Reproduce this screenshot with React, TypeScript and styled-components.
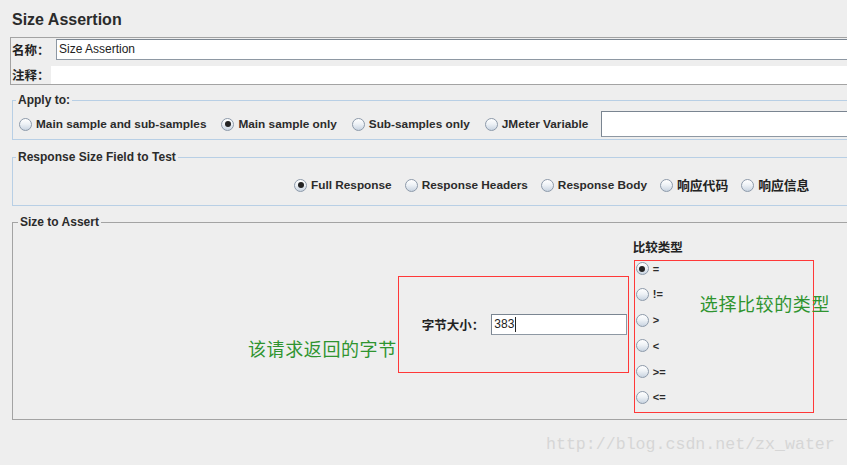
import React from "react";
import styled, { createGlobalStyle } from "styled-components";

const GlobalStyle = createGlobalStyle`
  html, body {
    margin: 0;
    padding: 0;
    background: #eeeeee;
    overflow: hidden;
  }
  body {
    font-family: "Liberation Sans", Arial, "Noto Sans CJK SC", sans-serif;
    color: #2b2b2b;
  }
`;

const Page = styled.div`
  position: relative;
  width: 880px;
  height: 465px;
  padding-left: 10px;
  box-sizing: border-box;
`;

const Title = styled.div`
  font: bold 16px/20px "Liberation Sans", Arial, sans-serif;
  color: #2b2b2b;
  padding: 10px 0 7px 2px;
`;

const NamePanel = styled.div`
  border: 1px solid #a3a3a3;
  display: flex;
  flex-direction: column;
`;

const NameRow = styled.div<{ $h: number; $mt: number }>`
  display: flex;
  align-items: center;
  height: ${(p) => p.$h}px;
  margin-top: ${(p) => p.$mt}px;
`;

const CjkLabel = styled.span<{ $w?: number }>`
  font: bold 12.5px/14px "Noto Sans CJK SC", sans-serif;
  color: #222;
  padding-left: 1px;
  width: ${(p) => (p.$w ? `${p.$w}px` : "auto")};
  flex: none;
`;

const TextField = styled.div<{ $bordered?: boolean }>`
  flex: 1;
  align-self: stretch;
  background: #ffffff;
  box-sizing: border-box;
  border: ${(p) => (p.$bordered ? "1px solid #8e98a3" : "none")};
  border-top-color: ${(p) => (p.$bordered ? "#7a8591" : "transparent")};
  font: 12px/19px "Liberation Sans", Arial, sans-serif;
  color: #222;
  padding-left: 2px;
  white-space: nowrap;
`;

const Fieldset = styled.fieldset<{ $color: string; $mt: number }>`
  margin: ${(p) => p.$mt}px 0 0 2px;
  padding: 0;
  border: 1px solid ${(p) => p.$color};
  min-width: 0;
`;

const Legend = styled.legend<{ $ml: number }>`
  font: bold 12px/14px "Liberation Sans", Arial, sans-serif;
  color: #2b2b2b;
  padding: 0 2px;
  margin-left: ${(p) => p.$ml}px;
`;

const RadioRow = styled.div<{ $pl: number; $pt: number; $pb: number; $h: number; $gap: number }>`
  display: flex;
  align-items: center;
  gap: ${(p) => p.$gap}px;
  height: ${(p) => p.$h}px;
  padding: ${(p) => p.$pt}px 0 ${(p) => p.$pb}px ${(p) => p.$pl}px;
`;

const Option = styled.label`
  display: flex;
  align-items: center;
  gap: 4px;
  flex: none;
  font: bold 11.8px/14px "Liberation Sans", Arial, sans-serif;
  color: #2b2b2b;
  white-space: nowrap;
`;

const CjkText = styled.span`
  font: bold 12.8px/14px "Noto Sans CJK SC", sans-serif;
  color: #222;
`;

const Radio = styled.span<{ $checked?: boolean }>`
  width: 13px;
  height: 13px;
  box-sizing: border-box;
  border-radius: 50%;
  border: 1px solid #8d9aaa;
  background: linear-gradient(180deg, #ffffff 0%, #eef2f6 45%, #c9d4e1 100%);
  display: flex;
  align-items: center;
  justify-content: center;
  flex: none;
  &::after {
    content: "";
    display: ${(p) => (p.$checked ? "block" : "none")};
    width: 6px;
    height: 6px;
    border-radius: 50%;
    background: #232323;
  }
`;

const VarField = styled.div`
  flex: 1;
  height: 26px;
  margin-left: -2px;
  background: #fff;
  box-sizing: border-box;
  border: 1px solid #8e98a3;
  border-top-color: #7a8591;
  border-left-color: #7a8591;
`;

const SizeContent = styled.div`
  display: flex;
  align-items: flex-start;
  height: 190px;
  padding-left: 235px;
  box-sizing: border-box;
`;

const Annotation = styled.div`
  font: 18px/24px "Noto Sans CJK SC", sans-serif;
  letter-spacing: 0.6px;
  color: #2f942f;
  white-space: nowrap;
`;

const LeftNote = styled(Annotation)`
  margin-top: 107px;
`;

const FloatNote = styled(Annotation)`
  position: absolute;
  left: 65px;
  top: 30px;
`;

const SizeBox = styled.div`
  border: 1px solid #ff3838;
  box-sizing: border-box;
  margin-top: 47px;
  margin-left: 1px;
  width: 231px;
  height: 97px;
  display: flex;
  align-items: center;
  padding-left: 22px;
  padding-right: 1px;
  flex: none;
`;

const SizeField = styled.div`
  margin-left: 7px;
  width: 136px;
  height: 21px;
  box-sizing: border-box;
  background: #fff;
  border: 1px solid #8e98a3;
  border-top-color: #7a8591;
  border-left-color: #7a8591;
  font: 12px/19px "Liberation Sans", Arial, sans-serif;
  color: #222;
  padding-left: 2px;
  display: flex;
  align-items: center;
`;

const Caret = styled.span`
  width: 1px;
  height: 15px;
  background: #222;
  margin-left: 1px;
`;

const CompareColumn = styled.div`
  margin-top: 11px;
  margin-left: 3px;
  display: flex;
  flex-direction: column;
`;

const CompareBox = styled.div`
  border: 1px solid #ff3838;
  box-sizing: border-box;
  position: relative;
  margin-top: 6px;
  margin-left: 2px;
  width: 180px;
  height: 153px;
  padding: 1px 0 0 1px;
  display: flex;
  flex-direction: column;
  gap: 12.8px;
`;

const SmallOption = styled(Option)`
  height: 13px;
  font-size: 11px;
`;

const Watermark = styled.div`
  position: absolute;
  left: 546px;
  top: 435px;
  font: 16.6px/20px "Liberation Mono", "DejaVu Sans Mono", monospace;
  color: #d6d6d6;
  white-space: nowrap;
`;

const applyOptions = [
  { label: "Main sample and sub-samples", checked: false },
  { label: "Main sample only", checked: true },
  { label: "Sub-samples only", checked: false },
  { label: "JMeter Variable", checked: false },
];

const fieldOptions = [
  { label: "Full Response", checked: true, cjk: false },
  { label: "Response Headers", checked: false, cjk: false },
  { label: "Response Body", checked: false, cjk: false },
  { label: "响应代码", checked: false, cjk: true },
  { label: "响应信息", checked: false, cjk: true },
];

const compareOptions = ["=", "!=", ">", "<", ">=", "<="];

export default function App() {
  return (
    <>
      <GlobalStyle />
      <Page>
        <Title>Size Assertion</Title>
        <NamePanel>
          <NameRow $h={21} $mt={1}>
            <CjkLabel $w={44}>名称：</CjkLabel>
            <TextField $bordered>Size Assertion</TextField>
          </NameRow>
          <NameRow $h={18} $mt={6}>
            <CjkLabel $w={39}>注释：</CjkLabel>
            <TextField />
          </NameRow>
        </NamePanel>

        <Fieldset $color="#b8cfe5" $mt={8}>
          <Legend $ml={3}>Apply to:</Legend>
          <RadioRow $pl={6} $pt={4} $pb={2} $h={26} $gap={15}>
            {applyOptions.map((o) => (
              <Option key={o.label}>
                <Radio $checked={o.checked} />
                {o.label}
              </Option>
            ))}
            <VarField />
          </RadioRow>
        </Fieldset>

        <Fieldset $color="#b8cfe5" $mt={10}>
          <Legend $ml={3}>Response Size Field to Test</Legend>
          <RadioRow $pl={281} $pt={11} $pb={10} $h={20} $gap={13}>
            {fieldOptions.map((o) => (
              <Option key={o.label}>
                <Radio $checked={o.checked} />
                {o.cjk ? <CjkText>{o.label}</CjkText> : o.label}
              </Option>
            ))}
          </RadioRow>
        </Fieldset>

        <Fieldset $color="#a3a3a3" $mt={9}>
          <Legend $ml={5}>Size to Assert</Legend>
          <SizeContent>
            <LeftNote>该请求返回的字节</LeftNote>
            <SizeBox>
              <CjkLabel>字节大小：</CjkLabel>
              <SizeField>
                383
                <Caret />
              </SizeField>
            </SizeBox>
            <CompareColumn>
              <CjkLabel>比较类型</CjkLabel>
              <CompareBox>
                {compareOptions.map((c, i) => (
                  <SmallOption key={c}>
                    <Radio $checked={i === 0} />
                    {c}
                  </SmallOption>
                ))}
                <FloatNote>选择比较的类型</FloatNote>
              </CompareBox>
            </CompareColumn>
          </SizeContent>
        </Fieldset>

        <Watermark>http://blog.csdn.net/zx_water</Watermark>
      </Page>
    </>
  );
}
